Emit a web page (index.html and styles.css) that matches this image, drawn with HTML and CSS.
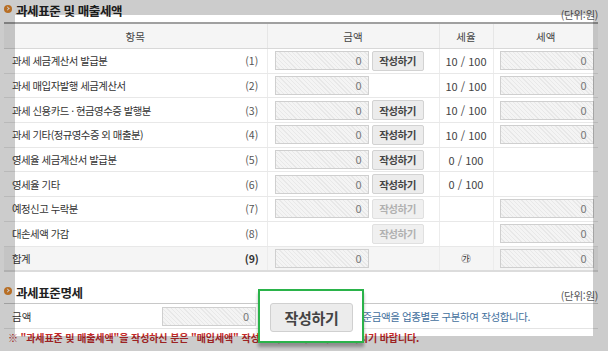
FILE: index.html
```html
<!DOCTYPE html>
<html lang="ko">
<head>
  <meta charset="UTF-8" />
  <meta name="viewport" content="width=device-width, initial-scale=1.0" />
  <title>과세표준 및 매출세액</title>
  <link rel="stylesheet" href="styles.css">
</head>
<body>
  <div class="page">
    <div class="sec-head">
      <h3 class="sec-title"><span class="bullet"></span>과세표준 및 매출세액</h3>
      <span class="unit">(단위:원)</span>
    </div>

    <table class="grid">
      <colgroup>
        <col class="c-label"><col class="c-no"><col class="c-amt"><col class="c-rate"><col class="c-tax">
      </colgroup>
      <thead>
        <tr><th colspan="2">항목</th><th>금액</th><th>세율</th><th>세액</th></tr>
      </thead>
      <tbody>
        <tr>
          <td class="label">과세 세금계산서 발급분</td><td class="no">(1)</td>
          <td><div class="amt"><span class="field">0</span><button class="btn">작성하기</button></div></td>
          <td class="rate">10 / 100</td>
          <td><span class="field tax">0</span></td>
        </tr>
        <tr>
          <td class="label">과세 매입자발행 세금계산서</td><td class="no">(2)</td>
          <td><div class="amt"><span class="field">0</span></div></td>
          <td class="rate">10 / 100</td>
          <td><span class="field tax">0</span></td>
        </tr>
        <tr>
          <td class="label">과세 신용카드 · 현금영수증 발행분</td><td class="no">(3)</td>
          <td><div class="amt"><span class="field">0</span><button class="btn">작성하기</button></div></td>
          <td class="rate">10 / 100</td>
          <td><span class="field tax">0</span></td>
        </tr>
        <tr>
          <td class="label">과세 기타(정규영수증 외 매출분)</td><td class="no">(4)</td>
          <td><div class="amt"><span class="field">0</span><button class="btn">작성하기</button></div></td>
          <td class="rate">10 / 100</td>
          <td><span class="field tax">0</span></td>
        </tr>
        <tr>
          <td class="label">영세율 세금계산서 발급분</td><td class="no">(5)</td>
          <td><div class="amt"><span class="field">0</span><button class="btn">작성하기</button></div></td>
          <td class="rate">0 / 100</td>
          <td></td>
        </tr>
        <tr>
          <td class="label">영세율 기타</td><td class="no">(6)</td>
          <td><div class="amt"><span class="field">0</span><button class="btn">작성하기</button></div></td>
          <td class="rate">0 / 100</td>
          <td></td>
        </tr>
        <tr>
          <td class="label">예정신고 누락분</td><td class="no">(7)</td>
          <td><div class="amt"><span class="field">0</span><button class="btn" disabled>작성하기</button></div></td>
          <td class="rate"></td>
          <td><span class="field tax">0</span></td>
        </tr>
        <tr>
          <td class="label">대손세액 가감</td><td class="no">(8)</td>
          <td><div class="amt"><span class="field blank"></span><button class="btn" disabled>작성하기</button></div></td>
          <td class="rate"></td>
          <td><span class="field tax">0</span></td>
        </tr>
        <tr class="total">
          <td class="label">합계</td><td class="no">(9)</td>
          <td><div class="amt"><span class="field">0</span></div></td>
          <td class="rate mark">㉮</td>
          <td><span class="field tax">0</span></td>
        </tr>
      </tbody>
    </table>

    <div class="sec-head second">
      <h3 class="sec-title"><span class="bullet"></span>과세표준명세</h3>
      <span class="unit">(단위:원)</span>
    </div>

    <div class="detail">
      <span class="d-label">금액</span>
      <span class="field d-field">0</span>
      <button class="btn under">작성하기</button>
      <span class="guide">※ 과세표준금액을 업종별로 구분하여 작성합니다.</span>
    </div>

    <p class="note">※ "과세표준 및 매출세액"을 작성하신 분은 "매입세액" 작성도 빠짐없이 함께 진행하시기 바랍니다.</p>
  </div>

  <div class="spot"></div>
  <div class="callout"><button class="big-btn">작성하기</button></div>
</body>
</html>
```

FILE: styles.css
```css
body {
  margin: 0;
  background: #fff;
  font-family: "Noto Sans CJK KR", "Noto Sans", sans-serif;
  font-size: 10.5px;
  color: #333;
  overflow: hidden;
}
.page {
  padding: 3px 10px 0 4px;
}
.sec-head {
  display: flex;
  justify-content: space-between;
  align-items: flex-end;
  height: 19px;
}
.sec-head.second {
  margin-top: 13px;
  height: 18px;
}
.sec-title {
  display: flex;
  align-items: center;
  gap: 4px;
  margin: 0;
  font-size: 12.5px;
  font-weight: bold;
  color: #222;
  letter-spacing: -0.4px;
  line-height: 16px;
  align-self: flex-start;
}
.bullet {
  position: relative;
  width: 8px;
  height: 8px;
  border-radius: 50%;
  background: #e68a2e;
  margin-top: -5px;
}
.bullet::after {
  content: "";
  position: absolute;
  left: 2px;
  top: 2.5px;
  width: 2px;
  height: 2px;
  border-top: 1px solid #fff;
  border-right: 1px solid #fff;
  transform: rotate(45deg);
}
.unit {
  font-size: 10.5px;
  color: #555;
  line-height: 14px;
  letter-spacing: -0.3px;
}
.grid {
  width: 594px;
  table-layout: fixed;
  border-collapse: collapse;
  border-top: 2px solid #a0a0a0;
  border-bottom: 2px solid #dcdcdc;
}
.c-label { width: 233px; }
.c-no { width: 30px; }
.c-amt { width: 172px; }
.c-rate { width: 54px; }
.c-tax { width: 105px; }
.grid th {
  height: 24px;
  padding: 0;
  background: #f5f5f5;
  font-weight: normal;
  color: #444;
  border-bottom: 1px solid #d8d8d8;
  border-left: 1px solid #e6e6e6;
}
.grid th:first-child { border-left: none; }
.grid td {
  height: 23.7px;
  padding: 0;
  border-bottom: 1px solid #e8e8e8;
  border-left: 1px solid #ececec;
}
.grid td.label {
  padding-left: 8px;
  border-left: none;
  font-size: 10.4px;
  letter-spacing: -0.5px;
  white-space: nowrap;
}
.grid td.no {
  text-align: center;
  color: #555;
  border-left: none;
}
.grid td.rate {
  text-align: center;
  color: #444;
  font-size: 11px;
}
.grid td.mark {
  color: #333;
  font-size: 9.5px;
}
.grid tr.total td {
  background: #f5f5f5;
  border-bottom: none;
}
.grid tr.total td.no {
  font-weight: bold;
  color: #333;
}
.amt {
  display: flex;
  align-items: center;
  gap: 3px;
  padding-left: 7px;
}
.field {
  display: inline-block;
  box-sizing: border-box;
  width: 94px;
  height: 19px;
  line-height: 17px;
  padding-right: 6px;
  text-align: right;
  color: #777;
  font-size: 11px;
  border: 1px solid #cfcfcf;
  background: repeating-linear-gradient(45deg, #f4f4f4 0 2px, #e8e8e8 2px 3px);
  vertical-align: middle;
}
.field.blank {
  visibility: hidden;
}
.field.tax {
  margin-left: 6px;
}
.btn {
  box-sizing: border-box;
  width: 52px;
  height: 20px;
  padding: 0;
  font-family: inherit;
  font-size: 10.5px;
  font-weight: bold;
  letter-spacing: -0.5px;
  color: #444;
  background: #ececec;
  border: 1px solid #d2d2d2;
  border-radius: 2px;
}
.btn:disabled {
  color: #b0b0b0;
  background: #f0f0f0;
  border-color: #e0e0e0;
}
.btn.under {
  visibility: hidden;
}
.detail {
  display: flex;
  align-items: center;
  gap: 4px;
  width: 594px;
  height: 24px;
  border-top: 1px solid #c8c8c8;
  border-bottom: 1px solid #e4e4e4;
}
.d-label {
  width: 150px;
  padding-left: 8px;
  box-sizing: border-box;
}
.d-field {
  margin-left: 4px;
}
.guide {
  margin-left: 6px;
  color: #43709d;
  letter-spacing: -0.4px;
}
.note {
  margin: 2px 0 0 4px;
  font-size: 10px;
  line-height: 14px;
  font-weight: bold;
  color: #c42a2a;
  letter-spacing: -0.1px;
  white-space: nowrap;
}
.spot {
  position: absolute;
  left: 15px;
  top: 15px;
  width: 578px;
  height: 321px;
  box-shadow: 0 0 0 1000px rgba(0, 0, 0, 0.2);
  pointer-events: none;
}
.callout {
  position: absolute;
  left: 258px;
  top: 289px;
  box-sizing: border-box;
  width: 106px;
  height: 54px;
  padding: 12px 0 0 10px;
  background: #fff;
  border: 2px solid #2ab34a;
  box-shadow: 0 4px 3px rgba(0, 0, 0, 0.3);
}
.big-btn {
  box-sizing: border-box;
  width: 83px;
  height: 29px;
  padding: 0;
  font-family: inherit;
  font-size: 15px;
  font-weight: bold;
  letter-spacing: -0.3px;
  color: #444;
  background: #ececec;
  border: 1px solid #d0d0d0;
  border-radius: 3px;
}
```
